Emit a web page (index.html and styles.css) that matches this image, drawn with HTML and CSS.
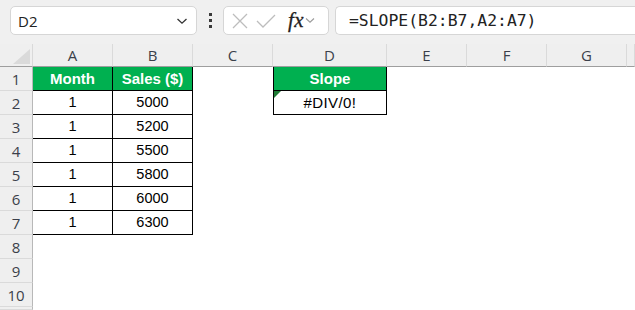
FILE: index.html
```html
<!DOCTYPE html>
<html lang="en">
<head>
  <meta charset="UTF-8">
  <title>SLOPE</title>
  <link rel="stylesheet" href="styles.css">
</head>
<body>

  <div class="bar">
    <div class="namebox">
      <span>D2</span>
      <svg width="12" height="8" viewBox="0 0 12 8"><path d="M1.5 2 L6 6.2 L10.5 2" fill="none" stroke="#333" stroke-width="1.3"/></svg>
    </div>
    <div class="dots"><i></i><i></i><i></i></div>
    <div class="fxbox">
      <svg width="18" height="18" viewBox="0 0 18 18"><path d="M2 2 L16 16 M16 2 L2 16" stroke="#bdbdbd" stroke-width="1.3"/></svg>
      <svg width="20" height="16" viewBox="0 0 20 16"><path d="M1 8 L7 14 L19 2" fill="none" stroke="#bdbdbd" stroke-width="1.3"/></svg>
      <span class="fx">fx</span>
      <svg width="10" height="7" viewBox="0 0 10 7"><path d="M1 1.5 L5 5.2 L9 1.5" fill="none" stroke="#9a9a9a" stroke-width="1.1"/></svg>
    </div>
    <div class="formula">=SLOPE(B2:B7,A2:A7)</div>
  </div>

  <div class="sheet">
    <div class="corner"><span></span></div>
    <div class="ch">A</div><div class="ch">B</div><div class="ch">C</div><div class="ch">D</div>
    <div class="ch">E</div><div class="ch">F</div><div class="ch">G</div><div class="ch">&nbsp;</div>

    <div class="rh">1</div>
    <div class="c t head">Month</div><div class="c t head">Sales ($)</div><div class="c"></div>
    <div class="c t d head">Slope</div><div class="c rest"></div>

    <div class="rh">2</div>
    <div class="c t">1</div><div class="c t">5000</div><div class="c"></div>
    <div class="c t d err">#DIV/0!</div><div class="c rest"></div>

    <div class="rh">3</div>
    <div class="c t">1</div><div class="c t">5200</div><div class="c wide"></div>

    <div class="rh">4</div>
    <div class="c t">1</div><div class="c t">5500</div><div class="c wide"></div>

    <div class="rh">5</div>
    <div class="c t">1</div><div class="c t">5800</div><div class="c wide"></div>

    <div class="rh">6</div>
    <div class="c t">1</div><div class="c t">6000</div><div class="c wide"></div>

    <div class="rh">7</div>
    <div class="c t">1</div><div class="c t">6300</div><div class="c wide"></div>

    <div class="rh">8</div><div class="c all"></div>
    <div class="rh">9</div><div class="c all"></div>
    <div class="rh">10</div><div class="c all"></div>
    <div class="rh"></div><div class="c all"></div>
  </div>

</body>
</html>
```

FILE: styles.css
```css
body {
  margin: 0;
  background: #fff;
  font-family: 'Liberation Sans', Arial, sans-serif;
  overflow: hidden;
}
.bar {
  display: flex;
  align-items: flex-start;
  height: 44px;
  box-sizing: border-box;
  padding: 6px 0 0 10px;
  background: #f0f0f0;
}
.namebox {
  width: 187px;
  height: 29px;
  box-sizing: border-box;
  background: #fff;
  border: 1px solid #d6d6d6;
  border-radius: 5px;
  display: flex;
  align-items: center;
  justify-content: space-between;
  padding: 0 8px 0 7px;
  font-family: 'Open Sans', sans-serif;
  font-size: 15px;
  color: #222;
}
.dots {
  width: 26px;
  height: 29px;
  display: flex;
  flex-direction: column;
  align-items: center;
  justify-content: center;
  gap: 3px;
}
.dots i {
  width: 3px;
  height: 3px;
  background: #3a3a3a;
}
.fxbox {
  width: 106px;
  height: 29px;
  box-sizing: border-box;
  background: #fff;
  border: 1px solid #d6d6d6;
  border-radius: 5px;
  display: flex;
  align-items: center;
  padding: 0 4px 0 7px;
  gap: 7px;
}
.fx {
  font-family: 'Liberation Serif', serif;
  font-style: italic;
  font-size: 21px;
  line-height: 27px;
  color: #222;
  margin-left: 5px;
  letter-spacing: 0.5px;
  -webkit-text-stroke: 0.3px #222;
}
.fxbox svg:last-child {
  margin-left: -6px;
}
.formula {
  flex: 1;
  margin-left: 6px;
  height: 29px;
  box-sizing: border-box;
  background: #fff;
  border: 1px solid #d6d6d6;
  border-right: none;
  border-radius: 5px 0 0 5px;
  padding-left: 13px;
  line-height: 27px;
  font-family: 'DejaVu Sans Mono', monospace;
  font-size: 16.4px;
  color: #222;
}
.sheet {
  display: grid;
  grid-template-columns: 33px 80px 80px 80px 114px 80px 80px 80px 1fr;
  grid-template-rows: 23px repeat(10, 24px) 3px;
  overflow: hidden;
}
.corner {
  background: #efefef;
  border-right: 1px solid #d9d9d9;
  border-bottom: 1px solid #9e9e9e;
  position: relative;
}
.corner span {
  position: absolute;
  right: 2px;
  bottom: 2px;
  width: 17px;
  height: 15px;
  background: #dadada;
  clip-path: polygon(100% 0, 100% 100%, 0 100%);
}
.ch {
  background: #efefef;
  border-right: 1px solid #dadada;
  border-bottom: 1px solid #9e9e9e;
  text-align: center;
  font-family: 'Open Sans', sans-serif;
  font-size: 15px;
  line-height: 22px;
  color: #3b3f4a;
}
.rh {
  background: #efefef;
  border-right: 1px solid #b8b8b8;
  border-bottom: 1px solid #dadada;
  text-align: center;
  font-family: 'Open Sans', sans-serif;
  font-size: 15px;
  line-height: 24px;
  color: #3b3f4a;
}
.c {
  box-sizing: border-box;
  text-align: center;
  font-size: 14.5px;
  line-height: 24px;
  color: #000;
}
.t {
  border-right: 1px solid #000;
  border-bottom: 1px solid #000;
  line-height: 23px;
}
.d {
  border-left: 1px solid #000;
}
.head {
  background: #00b050;
  color: #fff;
  font-weight: bold;
  font-size: 15px;
}
.err {
  position: relative;
  font-size: 15px;
  letter-spacing: 0.4px;
}
.err::before {
  content: "";
  position: absolute;
  top: 0;
  left: 0;
  border-top: 7px solid #1e7b34;
  border-right: 7px solid transparent;
}
.rest {
  grid-column: span 4;
}
.wide {
  grid-column: span 6;
}
.all {
  grid-column: 2 / -1;
}
```
